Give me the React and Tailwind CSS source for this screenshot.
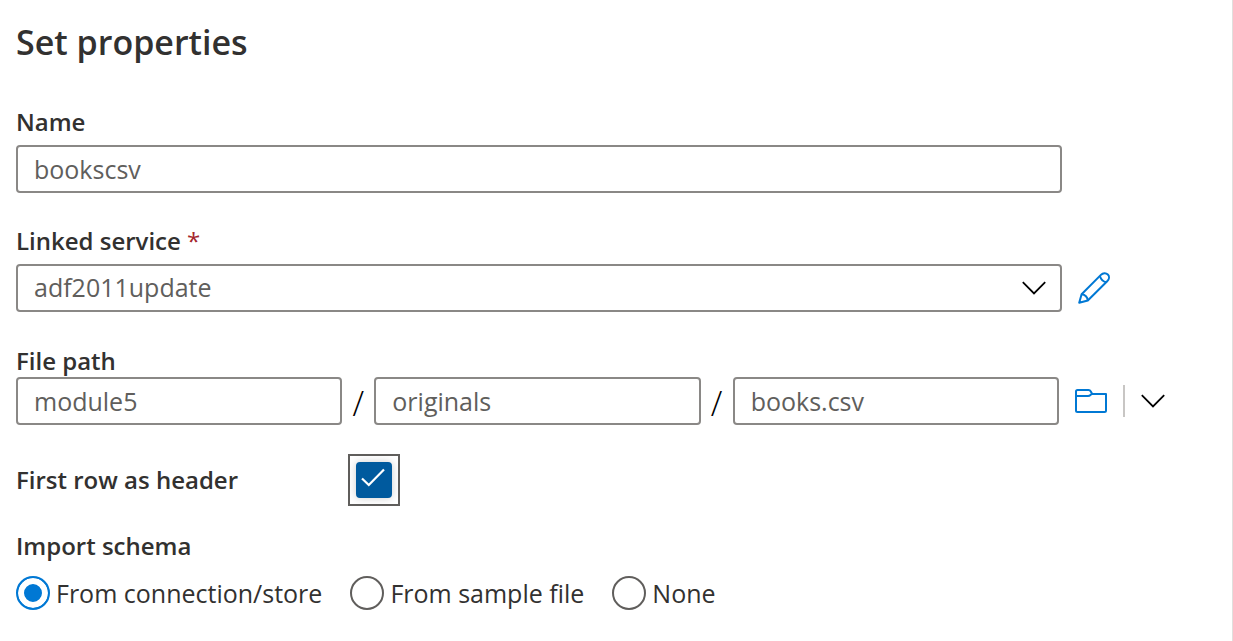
import { useState } from "react";

const field =
  "block h-12 w-full min-w-0 appearance-none rounded border-2 border-[#8a8886] bg-white px-4 text-[25px] text-[#605e5c] outline-none";
const label = "block text-2xl leading-8 font-semibold text-[#323130]";

function Chevron() {
  return (
    <svg className="block h-4 w-6" viewBox="0 0 24 16" fill="none" stroke="#000" strokeWidth="1.8" aria-hidden="true">
      <path d="M0.8 2.2 12 13.4 23.2 2.2" />
    </svg>
  );
}

function Pencil() {
  return (
    <svg className="block size-8" viewBox="0 0 32 32" fill="none" stroke="#0078d4" strokeWidth="2" strokeLinejoin="round" aria-hidden="true">
      <path d="M1.2 30.8 3.6 22.3 22.9 2.9C25 .8 28 .7 29.8 2.5S31.3 7.2 29.2 9.3L9.8 28.5Z" />
      <path d="M22 4.2C23 7.5 25 9.5 28.2 10.2M3.6 22.3C7 22.8 9.4 25 9.8 28.5" />
    </svg>
  );
}

function Folder() {
  return (
    <svg className="block h-6 w-8" viewBox="0 0 32 24" fill="none" stroke="#0078d4" strokeWidth="2" strokeLinejoin="round" aria-hidden="true">
      <path d="M1 2.5Q1 1 2.5 1H13.5Q15 1 15.8 2.5L17.2 5H31V21.5Q31 23 29.5 23H2.5Q1 23 1 21.5Z" />
      <path d="M1 7H13Q14.5 7 15.5 6L17.2 4.6" />
    </svg>
  );
}

function Slash() {
  return <span className="w-8 shrink-0 pt-1 text-center text-[34px] leading-10 font-light text-black">/</span>;
}

export default function App() {
  const [schema, setSchema] = useState("From connection/store");
  const [header, setHeader] = useState(true);

  return (
    <main className="min-h-screen overflow-hidden border-r border-[#e1dfdd] bg-white pr-[67px] pb-6 pl-4 font-['Open_Sans','Noto_Sans',sans-serif]">
      <h1 className="pt-[18px] text-[34px] leading-12 font-semibold text-[#323130]">Set properties</h1>

      <div className="mt-10 pr-[103px]">
        <label htmlFor="name" className={label}>Name</label>
        <input id="name" defaultValue="bookscsv" className={`${field} mt-[7px]`} />
      </div>

      <div className="mt-8 pr-[55px]">
        <label htmlFor="service" className={label}>
          Linked service <span className="font-normal text-[#a4262c]">*</span>
        </label>
        <div className="mt-[7px] flex items-center gap-4">
          <div className="relative min-w-0 flex-1">
            <select id="service" className={field}>
              <option>adf2011update</option>
            </select>
            <span className="pointer-events-none absolute inset-y-0 right-4 flex items-center">
              <Chevron />
            </span>
          </div>
          <button type="button" aria-label="Edit linked service"><Pencil /></button>
        </div>
      </div>

      <div className="mt-[33px]">
        <label htmlFor="container" className={label}>File path</label>
        <div className="flex items-center">
          <input id="container" defaultValue="module5" className={field} />
          <Slash />
          <input aria-label="Directory" defaultValue="originals" className={field} />
          <Slash />
          <input aria-label="File name" defaultValue="books.csv" className={field} />
          <button type="button" aria-label="Browse" className="ml-4 shrink-0"><Folder /></button>
          <span className="mx-4 h-8 w-0.5 shrink-0 bg-[#c8c6c4]" />
          <button type="button" aria-label="More browse options" className="shrink-0"><Chevron /></button>
        </div>
      </div>

      <div className="mt-[29px] flex items-center">
        <label htmlFor="header" className={`${label} w-[332px]`}>First row as header</label>
        <span className="relative flex size-[52px] items-center justify-center border-2 border-[#605e5c]">
          <input
            id="header"
            type="checkbox"
            checked={header}
            onChange={(e) => setHeader(e.target.checked)}
            className="size-9 appearance-none rounded border-2 border-[#005a9e] shadow-[0_0_8px_rgba(0,0,0,0.2)] outline-none checked:bg-[#005a9e]"
          />
          {header && (
            <svg className="pointer-events-none absolute size-9" viewBox="0 0 36 36" fill="none" stroke="#fff" strokeWidth="2.2" aria-hidden="true">
              <path d="M6 16.5 12.8 23 28 7.5" />
            </svg>
          )}
        </span>
      </div>

      <fieldset className="mt-6">
        <legend className={label}>Import schema</legend>
        <div className="mt-3.5 flex flex-wrap gap-x-7 gap-y-3">
          {["From connection/store", "From sample file", "None"].map((option) => (
            <label key={option} className="flex items-center gap-1.5 text-[25px] leading-8 text-[#323130]">
              <input
                type="radio"
                name="schema"
                checked={schema === option}
                onChange={() => setSchema(option)}
                className="size-[34px] shrink-0 appearance-none rounded-full border-2 border-[#605e5c] bg-white outline-none checked:border-[#0078d4] checked:bg-[#0078d4] checked:shadow-[inset_0_0_0_6px_#fff]"
              />
              {option}
            </label>
          ))}
        </div>
      </fieldset>
    </main>
  );
}
